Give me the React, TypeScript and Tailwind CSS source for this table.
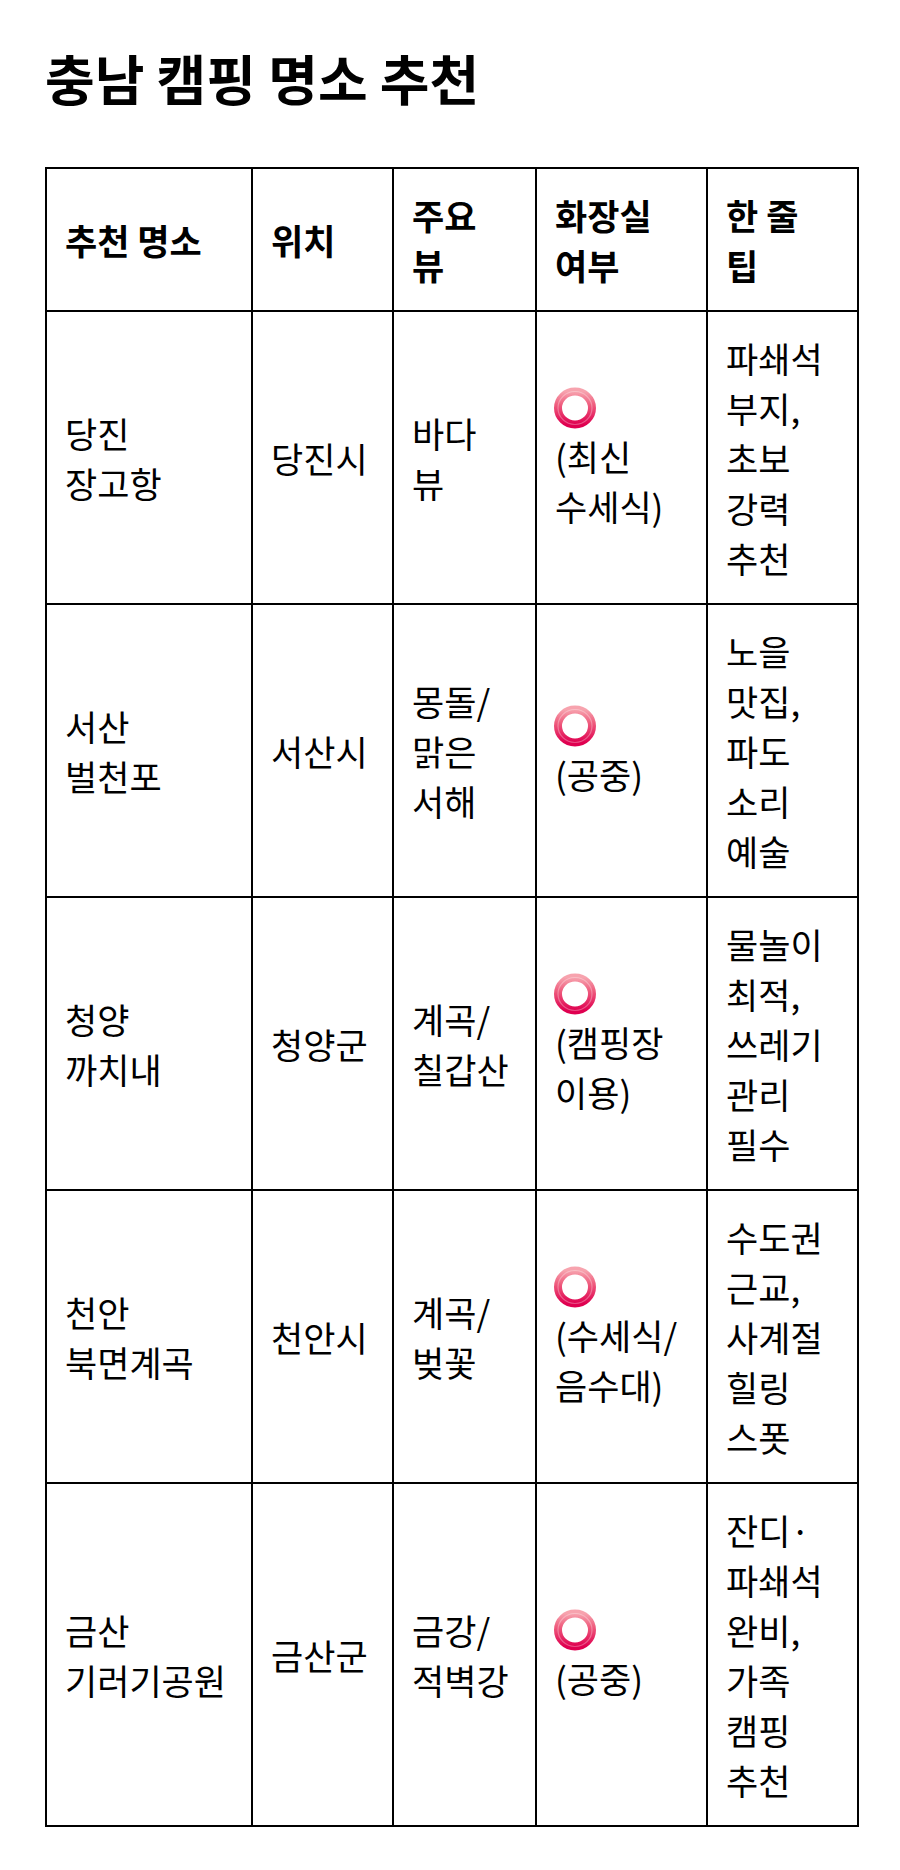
import React from "react";

type Row = {
  place: string[];
  location: string;
  view: string[];
  toilet: string[];
  tip: string[];
};

const rows: Row[] = [
  {
    place: ["당진", "장고항"],
    location: "당진시",
    view: ["바다", "뷰"],
    toilet: ["(최신", "수세식)"],
    tip: ["파쇄석", "부지,", "초보", "강력", "추천"],
  },
  {
    place: ["서산", "벌천포"],
    location: "서산시",
    view: ["몽돌/", "맑은", "서해"],
    toilet: ["(공중)"],
    tip: ["노을", "맛집,", "파도", "소리", "예술"],
  },
  {
    place: ["청양", "까치내"],
    location: "청양군",
    view: ["계곡/", "칠갑산"],
    toilet: ["(캠핑장", "이용)"],
    tip: ["물놀이", "최적,", "쓰레기", "관리", "필수"],
  },
  {
    place: ["천안", "북면계곡"],
    location: "천안시",
    view: ["계곡/", "벚꽃"],
    toilet: ["(수세식/", "음수대)"],
    tip: ["수도권", "근교,", "사계절", "힐링", "스폿"],
  },
  {
    place: ["금산", "기러기공원"],
    location: "금산군",
    view: ["금강/", "적벽강"],
    toilet: ["(공중)"],
    tip: ["잔디·", "파쇄석", "완비,", "가족", "캠핑", "추천"],
  },
];

const headers = [
  { lines: ["추천 명소"], w: "w-[206px]" },
  { lines: ["위치"], w: "w-[141px]" },
  { lines: ["주요", "뷰"], w: "w-[143px]" },
  { lines: ["화장실", "여부"], w: "w-[171px]" },
  { lines: ["한 줄", "팁"], w: "w-[151px]" },
];

function Lines({ lines }: { lines: string[] }) {
  return (
    <>
      {lines.map((l, i) => (
        <span key={i} className="block whitespace-nowrap">
          {l}
        </span>
      ))}
    </>
  );
}

// stands in for the ⭕ emoji, no colour emoji font in the sandbox
function Ring() {
  return (
    <span className="flex h-[46px] items-center">
      <svg width="44" height="42" viewBox="0 0 44 42" className="-ml-0.5">
        <defs>
          <linearGradient id="ringGrad" x1="0" y1="0" x2="0" y2="1">
            <stop offset="0" stopColor="#f7a3ae" />
            <stop offset="0.4" stopColor="#ef5d7e" />
            <stop offset="1" stopColor="#df0050" />
          </linearGradient>
        </defs>
        <ellipse cx="22" cy="21" rx="17" ry="16.5" fill="none" stroke="url(#ringGrad)" strokeWidth="8" />
        <ellipse cx="22" cy="21" rx="17" ry="16.5" fill="none" stroke="#ffffff" strokeOpacity="0.3" strokeWidth="1.2" />
      </svg>
    </span>
  );
}

const cell = "border-2 border-black px-[18px] pt-[21px] pb-5 align-middle text-left";

export default function App() {
  return (
    <div
      className="min-h-[1870px] bg-white px-[45px] text-black"
      style={{ fontFamily: '"Noto Sans CJK KR", "Noto Sans", sans-serif' }}
    >
      <h1 className="pt-[40px] text-[54px] font-bold leading-[76px]">충남 캠핑 명소 추천</h1>
      <table className="mt-[51px] w-[812px] table-fixed border-collapse text-[35px] leading-[50px]">
        <thead>
          <tr>
            {headers.map((h) => (
              <th key={h.lines[0]} className={`${cell} ${h.w} font-bold`}>
                <Lines lines={h.lines} />
              </th>
            ))}
          </tr>
        </thead>
        <tbody>
          {rows.map((r) => (
            <tr key={r.location}>
              <td className={cell}>
                <Lines lines={r.place} />
              </td>
              <td className={cell}>{r.location}</td>
              <td className={cell}>
                <Lines lines={r.view} />
              </td>
              <td className={cell}>
                <Ring />
                <Lines lines={r.toilet} />
              </td>
              <td className={cell}>
                <Lines lines={r.tip} />
              </td>
            </tr>
          ))}
        </tbody>
      </table>
    </div>
  );
}
